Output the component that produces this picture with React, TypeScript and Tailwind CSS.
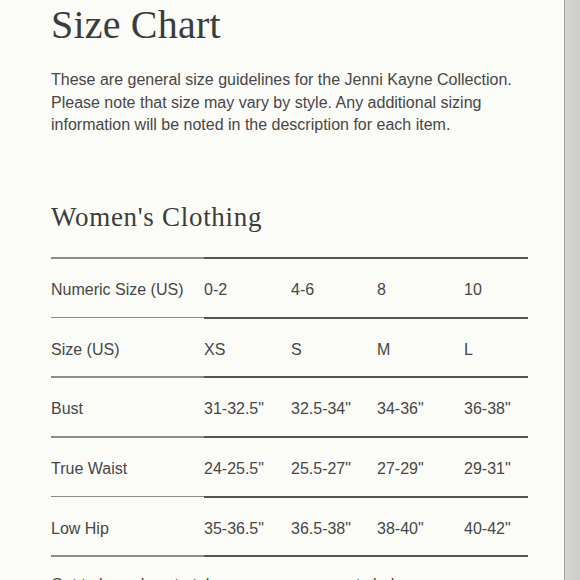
import React from "react";

const rows: string[][] = [
  ["Numeric Size (US)", "0-2", "4-6", "8", "10"],
  ["Size (US)", "XS", "S", "M", "L"],
  ["Bust", '31-32.5"', '32.5-34"', '34-36"', '36-38"'],
  ["True Waist", '24-25.5"', '25.5-27"', '27-29"', '29-31"'],
  ["Low Hip", '35-36.5"', '36.5-38"', '38-40"', '40-42"'],
];

export default function App() {
  return (
    <div className="w-[580px] h-[580px] overflow-hidden flex bg-[#fbfbf8]">
      <div className="flex-1 min-w-0 pl-[51px] pr-[36px] pt-[5px] text-[#474747] [font-family:'Liberation_Sans',Arial,sans-serif]">
        <h1 className="text-[40px] leading-[40px] tracking-[0.2px] text-[#3c3c3c] [font-family:'Liberation_Serif','Times_New_Roman',serif]">
          Size Chart
        </h1>
        <p className="mt-[24px] max-w-[470px] text-[16px] leading-[22.5px]">
          These are general size guidelines for the Jenni Kayne Collection. Please note that size may vary by style. Any additional sizing information will be noted in the description for each item.
        </p>
        <h2 className="mt-[64.5px] text-[27px] leading-[32px] tracking-[0.7px] text-[#3c3c3c] [font-family:'Liberation_Serif','Times_New_Roman',serif]">
          Women's Clothing
        </h2>
        <div className="mt-[24px] flex flex-col">
          <div className="flex h-[2px]">
            <div className="w-[153px] h-[1.5px] bg-[#8c8c8c]" />
            <div className="flex-1 h-[2px] bg-[#555555]" />
          </div>
          {rows.map((r, i) => (
            <div key={i} className="flex flex-col">
              <div className="flex h-[57.7px] items-center pt-[4px] text-[16px]">
                <div className="w-[153px]">{r[0]}</div>
                <div className="w-[87px]">{r[1]}</div>
                <div className="w-[86px]">{r[2]}</div>
                <div className="w-[87px]">{r[3]}</div>
                <div className="flex-1">{r[4]}</div>
              </div>
              <div className="flex h-[2px]">
                <div className="w-[153px] h-[1.5px] bg-[#8c8c8c]" />
                <div className="flex-1 h-[2px] bg-[#555555]" />
              </div>
            </div>
          ))}
          <p className="mt-[16px] text-[16px] leading-[23px]">
            Get to know how to take your measurements below.
          </p>
        </div>
      </div>
      <div className="w-[16px] shrink-0 border-l border-[#a3a3a3] bg-gradient-to-r from-[#d6d6d4] to-[#cdcdcb]" />
    </div>
  );
}
